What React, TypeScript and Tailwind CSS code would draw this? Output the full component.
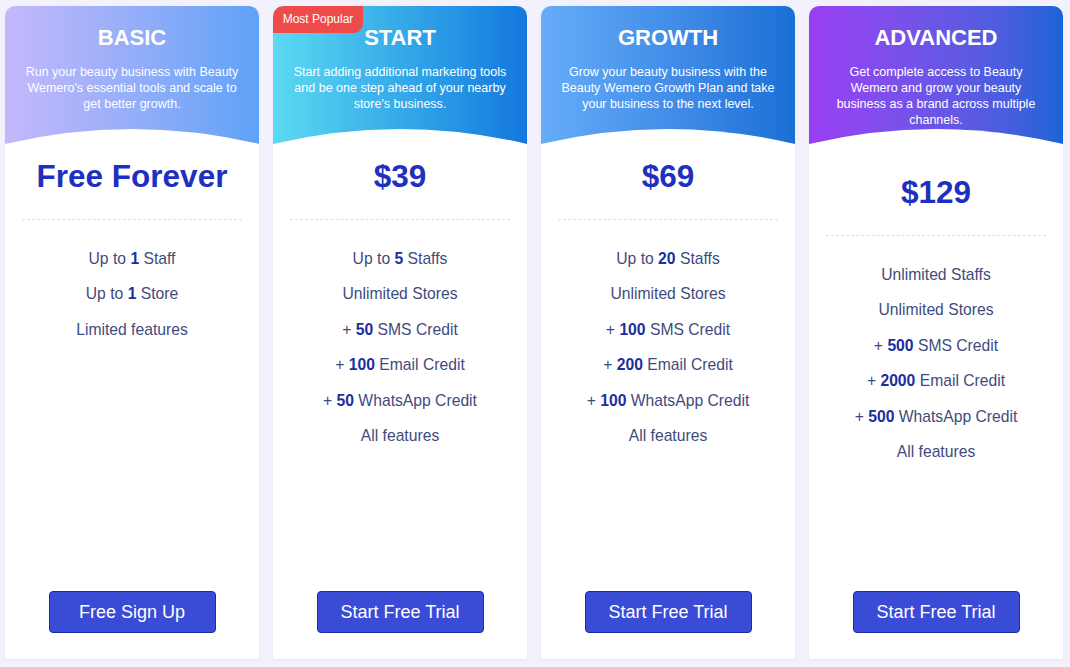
import React from "react"

type Plan = {
  name: string
  desc: string
  price: string
  features: React.ReactNode[]
  cta: string
  gradient: string
  popular?: boolean
}

const B = ({ children }: { children: React.ReactNode }) => (
  <b className="font-bold text-[#1b2f9e]">{children}</b>
)

const plans: Plan[] = [
  {
    name: "BASIC",
    desc: "Run your beauty business with Beauty Wemero's essential tools and scale to get better growth.",
    price: "Free Forever",
    features: [
      <>Up to <B>1</B> Staff</>,
      <>Up to <B>1</B> Store</>,
      <>Limited features</>,
    ],
    cta: "Free Sign Up",
    gradient: "bg-gradient-to-r from-[#c5b8fb] to-[#5da2f6]",
  },
  {
    name: "START",
    desc: "Start adding additional marketing tools and be one step ahead of your nearby store's business.",
    price: "$39",
    features: [
      <>Up to <B>5</B> Staffs</>,
      <>Unlimited Stores</>,
      <>+ <B>50</B> SMS Credit</>,
      <>+ <B>100</B> Email Credit</>,
      <>+ <B>50</B> WhatsApp Credit</>,
      <>All features</>,
    ],
    cta: "Start Free Trial",
    gradient: "bg-gradient-to-r from-[#5cdaf1] to-[#1477dd]",
    popular: true,
  },
  {
    name: "GROWTH",
    desc: "Grow your beauty business with the Beauty Wemero Growth Plan and take your business to the next level.",
    price: "$69",
    features: [
      <>Up to <B>20</B> Staffs</>,
      <>Unlimited Stores</>,
      <>+ <B>100</B> SMS Credit</>,
      <>+ <B>200</B> Email Credit</>,
      <>+ <B>100</B> WhatsApp Credit</>,
      <>All features</>,
    ],
    cta: "Start Free Trial",
    gradient: "bg-gradient-to-r from-[#66acf9] to-[#196fd6]",
  },
  {
    name: "ADVANCED",
    desc: "Get complete access to Beauty Wemero and grow your beauty business as a brand across multiple channels.",
    price: "$129",
    features: [
      <>Unlimited Staffs</>,
      <>Unlimited Stores</>,
      <>+ <B>500</B> SMS Credit</>,
      <>+ <B>2000</B> Email Credit</>,
      <>+ <B>500</B> WhatsApp Credit</>,
      <>All features</>,
    ],
    cta: "Start Free Trial",
    gradient: "bg-gradient-to-r from-[#9a3df4] to-[#1763d8]",
  },
]

function PlanCard({ plan }: { plan: Plan }) {
  return (
    <div className="relative flex flex-col bg-white rounded-t-[10px] rounded-b-[3px] shadow-[0_1px_3px_rgba(80,80,160,0.08)] overflow-hidden">
      {/* header backdrop, curved at the bottom */}
      <div className={`absolute inset-x-0 top-0 h-[139px] ${plan.gradient}`}>
        <svg className="absolute left-0 bottom-0 w-full h-[17px]" viewBox="0 0 254 17" preserveAspectRatio="none">
          <path d="M0 17 L0 16 Q127 -14 254 16 L254 17 Z" fill="white" />
        </svg>
      </div>

      {plan.popular && (
        <div className="absolute left-0 top-0 z-10 w-[90px] h-[27px] bg-[#ef4b4b] text-white text-[12px] leading-[27px] text-center rounded-tl-[10px] rounded-br-[9px]">
          Most Popular
        </div>
      )}

      <div className="relative flex flex-col items-center text-center px-[20px] pt-[18px]">
        <h2 className="text-white font-bold text-[22px] leading-[28px]">{plan.name}</h2>
        <p className="mt-[12px] text-white text-[12.5px] leading-[16px]">{plan.desc}</p>
      </div>

      <div className="relative mt-[46px] text-center text-[#1e30bf] font-bold text-[31.5px] leading-[36px]">
        {plan.price}
      </div>

      <div className="mx-[17px] mt-[25px] border-t border-dashed border-[#dcdcee]" />

      <ul className="mt-[21px] flex flex-col items-center text-[15.7px] leading-[35.4px] text-[#3f4b7c]">
        {plan.features.map((f, i) => (
          <li key={i}>{f}</li>
        ))}
      </ul>

      <div className="mt-auto flex justify-center pb-[26px]">
        <button className="w-[167px] h-[42px] rounded-[4px] bg-[#3a4bd6] border border-[#1c2cae] text-white text-[18px]">
          {plan.cta}
        </button>
      </div>
    </div>
  )
}

export default function App() {
  return (
    <main
      className="w-[1070px] h-[667px] bg-[#f3f2fc] pl-[5px] pr-[7px] pt-[6px] pb-[8px]"
      style={{ fontFamily: '"Liberation Sans", Arial, sans-serif' }}
    >
      <div className="grid grid-cols-4 gap-[14px] h-full">
        {plans.map((p) => (
          <PlanCard key={p.name} plan={p} />
        ))}
      </div>
    </main>
  )
}
